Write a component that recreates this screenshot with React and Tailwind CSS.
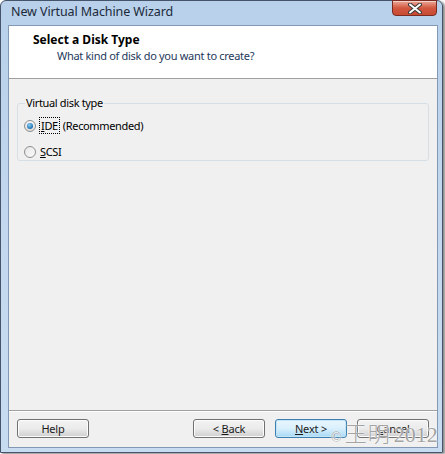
import React, { useState } from "react";

const font = { fontFamily: '"Noto Sans", "Open Sans", sans-serif' };

const Radio = ({ checked }) => (
  <span
    className={`w-[12px] h-[12px] rounded-full border border-[#8e8f8f] flex items-center justify-center shrink-0 ${
      checked ? "bg-gradient-to-b from-[#f6f6f6] to-[#dcdcdc]" : "bg-gradient-to-br from-[#e6e6e6] to-[#fbfbfb]"
    }`}
  >
    {checked && (
      <span className="w-[6px] h-[6px] rounded-full bg-[radial-gradient(circle_at_40%_35%,#8ad0f5,#1f6fb0_70%,#124d86)]" />
    )}
  </span>
);

const Button = ({ children, primary }) => (
  <button
    className={`w-[72px] h-[19px] rounded-[3px] border text-[11px] tracking-[-0.2px] leading-none text-[#1a1a1a] ${
      primary
        ? "border-[#3c7fb1] bg-gradient-to-b from-[#eaf6fd] via-[#d9f0fc] to-[#a7d9f5] shadow-[inset_0_0_0_1px_#c4e5f6]"
        : "border-[#707070] bg-gradient-to-b from-[#f2f2f2] via-[#ebebeb] to-[#cfcfcf] shadow-[inset_0_0_0_1px_#fcfcfc]"
    }`}
  >
    {children}
  </button>
);

export default function App() {
  const [diskType, setDiskType] = useState("ide");

  return (
    <div className="w-[445px] h-[454px] bg-white relative" style={font}>
      <div className="w-[443px] h-[453px] rounded-t-[6px] border border-[#46546a] bg-gradient-to-b from-[#b8d0ea] via-[#c3d8ee] to-[#c8dcf1] flex flex-col shadow-[2px_1px_2px_rgba(0,0,0,0.45)]">
        {/* Title bar */}
        <div className="h-[24px] flex items-start justify-between pl-[10px] pr-[5px] shrink-0">
          <span className="text-[12.5px] tracking-[-0.1px] text-[#1b2a3a] mt-[2px] leading-[18px]">New Virtual Machine Wizard</span>
          <div className="w-[45px] h-[16px] -mt-[1px] rounded-b-[4px] border border-[#7a2a1e] bg-gradient-to-b from-[#e9a898] via-[#d2573f] to-[#c84a34] flex items-center justify-center shadow-[inset_0_1px_0_rgba(255,255,255,0.5)]">
            <svg width="14" height="11" viewBox="0 0 14 11">
              <path d="M2 1.5 L12 9.5 M12 1.5 L2 9.5" stroke="#3a3a3a" strokeWidth="4" strokeLinecap="round" />
              <path d="M2 1.5 L12 9.5 M12 1.5 L2 9.5" stroke="#ffffff" strokeWidth="2" strokeLinecap="round" />
            </svg>
          </div>
        </div>

        {/* Client area */}
        <div className="flex-1 ml-[7px] mr-[4px] mb-[4px] border border-[#8398b3] bg-[#f0f0f0] flex flex-col">
          <div className="h-[53px] bg-white border-b border-[#a0a0a0] shrink-0 pl-[24px] pt-[6px]">
            <div className="text-[12px] font-bold text-black leading-[16px]">Select a Disk Type</div>
            <div className="text-[11px] tracking-[-0.3px] text-[#1e395b] leading-[16px] pl-[24px]">
              What kind of disk do you want to create?
            </div>
          </div>

          <div className="flex-1 px-[8px] pt-[17px]">
            <fieldset className="border border-[#d5dfe5] rounded-[3px] h-[65px] px-[6px]">
              <legend className="text-[11px] tracking-[-0.35px] text-black px-[1px] ml-[1px] leading-[14px]">
                Virtual disk type
              </legend>
              <label className="flex items-center gap-[4px] mt-[9px] h-[14px]" onClick={() => setDiskType("ide")}>
                <Radio checked={diskType === "ide"} />
                <span className="text-[11px] tracking-[-0.35px] text-black leading-[14px]">
                  <span className="outline outline-1 outline-dotted outline-black px-[1px] mr-[4px]">
                    <u>I</u>DE
                  </span>
                  (Recommended)
                </span>
              </label>
              <label className="flex items-center gap-[4px] mt-[12px] h-[14px]" onClick={() => setDiskType("scsi")}>
                <Radio checked={diskType === "scsi"} />
                <span className="text-[11px] tracking-[-0.35px] text-black leading-[14px]">
                  <u>S</u>CSI
                </span>
              </label>
            </fieldset>
          </div>

          <div className="h-[37px] shrink-0 border-t border-[#a0a0a0] shadow-[inset_0_1px_0_#ffffff] px-[8px] pt-[8px] flex items-start">
            <Button>Help</Button>
            <div className="ml-auto flex gap-[10px]">
              <Button>
                &lt; <u>B</u>ack
              </Button>
              <Button primary>
                <u>N</u>ext &gt;
              </Button>
              <Button>
                <u>C</u>ancel
              </Button>
            </div>
          </div>
        </div>
      </div>

      {/* Watermark */}
      <div
        className="absolute left-[331px] top-[418px] flex items-baseline gap-[3px] text-[#a3a3a3] pointer-events-none [text-shadow:0_0_2px_#ffffff,0_0_1px_#ffffff]"
        style={{ fontFamily: '"Liberation Serif", "Noto Sans CJK SC", serif' }}
      >
        <span className="text-[14px]">©</span>
        <span
          className="text-[22px] leading-[28px] tracking-[1px]"
          style={{ fontFamily: '"Noto Sans CJK SC", serif', fontWeight: 300 }}
        >
          王明
        </span>
        <span className="text-[22px] leading-[28px]">2012</span>
      </div>
    </div>
  );
}
